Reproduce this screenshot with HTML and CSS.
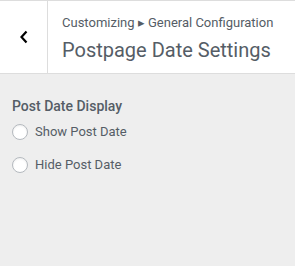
FILE: index.html
```html
<!DOCTYPE html>
<html lang="en">
  <head>
    <meta charset="UTF-8" />
    <title>Postpage Date Settings</title>
    <link rel="stylesheet" href="styles.css">
  </head>
  <body>
    <div class="panel">
      <div class="header">
        <button class="back" type="button" aria-label="Back">
          <svg width="10" height="14" viewBox="0 0 10 14">
            <path d="M7.5 1.5 L2.5 7 L7.5 12.5" fill="none" stroke="#000" stroke-width="2.2" />
          </svg>
        </button>
        <div class="title">
          <span class="crumb">Customizing &#9656; General Configuration</span>
          <h2>Postpage Date Settings</h2>
        </div>
      </div>

      <div class="section">
        <span class="label">Post Date Display</span>
        <label class="option"><input type="radio" name="post-date" /> Show Post Date</label>
        <label class="option"><input type="radio" name="post-date" /> Hide Post Date</label>
      </div>
    </div>
  </body>
</html>
```

FILE: styles.css
```css
* {
  margin: 0;
  padding: 0;
  box-sizing: border-box;
}

body {
  font-family: Roboto, "Noto Sans", sans-serif;
  background-color: #eeeeee;
  color: #555d66;
}

.panel {
  width: 295px;
  height: 266px;
}

.header {
  display: flex;
  height: 74px;
  background-color: #ffffff;
  border-top: 1px solid #dddddd;
  border-bottom: 1px solid #dddddd;
}

.back {
  width: 48px;
  flex-shrink: 0;
  display: flex;
  align-items: center;
  justify-content: center;
  background: #ffffff;
  border: none;
  border-right: 1px solid #dddddd;
}

.title {
  display: flex;
  flex-direction: column;
  padding: 13px 0 0 14px;
}

.crumb {
  font-size: 13px;
  line-height: 18px;
}

.title h2 {
  font-size: 20px;
  font-weight: 400;
  line-height: 26px;
  margin-top: 5px;
}

.section {
  display: flex;
  flex-direction: column;
  padding: 23px 12px 0 12px;
}

.label {
  font-size: 14px;
  font-weight: 500;
  line-height: 18px;
}

.option {
  display: flex;
  align-items: center;
  gap: 7px;
  font-size: 13px;
  line-height: 20px;
  height: 33px;
}

.option input {
  appearance: none;
  width: 16px;
  height: 16px;
  border: 1px solid #b4b9be;
  border-radius: 50%;
  background: #ffffff;
  box-shadow: inset 0 1px 2px rgba(0, 0, 0, 0.07);
}
```
